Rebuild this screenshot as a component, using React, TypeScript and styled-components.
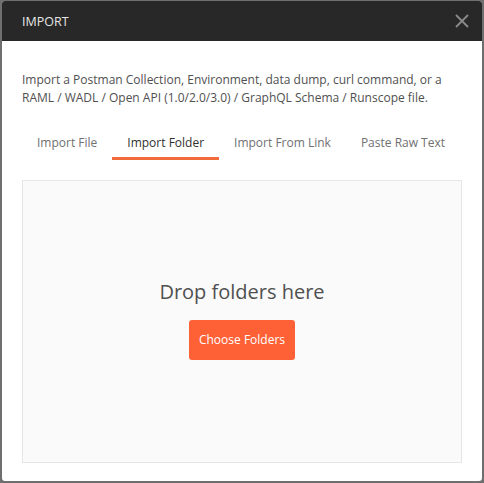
import React, { useState } from "react";
import styled, { createGlobalStyle } from "styled-components";

const Global = createGlobalStyle`
  html, body { margin: 0; padding: 0; background: #6f6f6f; }
  body { font-family: "Open Sans", "Noto Sans", sans-serif; }
  * { box-sizing: border-box; }
`;

const Backdrop = styled.div`
  width: 484px;
  height: 483px;
  padding: 1px 2px 2px 2px;
  background: #6f6f6f;
`;

const Modal = styled.div`
  width: 480px;
  height: 480px;
  background: #ffffff;
  border-radius: 3px;
  overflow: hidden;
  display: flex;
  flex-direction: column;
`;

const Header = styled.div`
  height: 40px;
  background: #282828;
  display: flex;
  align-items: center;
  justify-content: space-between;
  padding: 0 12px 0 20px;
`;

const Title = styled.div`
  color: #e6e6e6;
  font-size: 12.5px;
`;

const Close = styled.button`
  background: none;
  border: none;
  padding: 0;
  width: 16px;
  height: 16px;
  display: flex;
  cursor: pointer;
`;

const Body = styled.div`
  flex: 1;
  display: flex;
  flex-direction: column;
  padding: 30px 20px 18px 20px;
`;

const Description = styled.p`
  margin: 0;
  color: #505050;
  font-size: 12px;
  line-height: 18px;
`;

const Tabs = styled.div`
  display: flex;
  margin-top: 23px;
`;

const Tab = styled.button<{ $active?: boolean }>`
  background: none;
  border: none;
  font-family: inherit;
  font-size: 12px;
  line-height: 18px;
  white-space: nowrap;
  padding: 4px 15px 5px 15px;
  color: ${(p) => (p.$active ? "#303030" : "#707070")};
  border-bottom: 3px solid ${(p) => (p.$active ? "#f26b3a" : "transparent")};
  cursor: pointer;
`;

const DropZone = styled.div`
  margin-top: 20px;
  flex: 1;
  background: #fafafa;
  border: 1px solid #e6e6e6;
  display: flex;
  flex-direction: column;
  align-items: center;
  justify-content: center;
  padding-bottom: 6px;
`;

const DropText = styled.div`
  font-size: 20px;
  color: #505050;
  line-height: 28px;
`;

const Primary = styled.button`
  margin-top: 14px;
  height: 40px;
  padding: 0 10px;
  background: #ff6137;
  color: #ffffff;
  border: none;
  border-radius: 3px;
  font-family: inherit;
  font-size: 12px;
  cursor: pointer;
`;

const tabs = ["Import File", "Import Folder", "Import From Link", "Paste Raw Text"];

export default function App() {
  const [active, setActive] = useState(1);
  return (
    <>
      <Global />
      <Backdrop>
        <Modal>
          <Header>
            <Title>IMPORT</Title>
            <Close aria-label="close">
              <svg width="16" height="16" viewBox="0 0 16 16">
                <path d="M2 2 L14 14 M14 2 L2 14" stroke="#8a8a8a" strokeWidth="1.8" />
              </svg>
            </Close>
          </Header>
          <Body>
            <Description>
              Import a Postman Collection, Environment, data dump, curl command, or a RAML / WADL / Open
              API (1.0/2.0/3.0) / GraphQL Schema / Runscope file.
            </Description>
            <Tabs>
              {tabs.map((t, i) => (
                <Tab key={t} $active={i === active} onClick={() => setActive(i)}>
                  {t}
                </Tab>
              ))}
            </Tabs>
            <DropZone>
              <DropText>Drop folders here</DropText>
              <Primary>Choose Folders</Primary>
            </DropZone>
          </Body>
        </Modal>
      </Backdrop>
    </>
  );
}
